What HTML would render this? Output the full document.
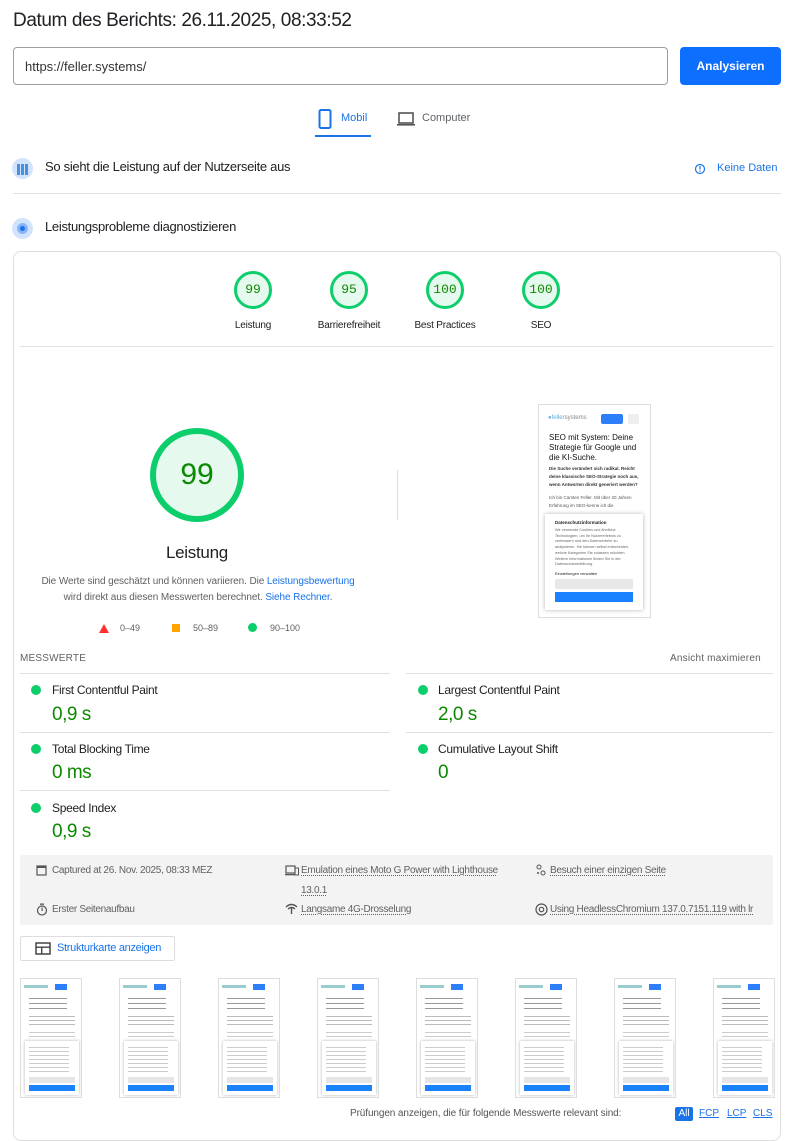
<!DOCTYPE html>
<html><head><meta charset="utf-8"><style>
*{box-sizing:border-box;margin:0;padding:0}
body{width:788px;height:1128px;background:#fff;font-family:"Liberation Sans",sans-serif;color:#202124;position:relative;overflow:hidden}
.a{position:absolute;white-space:nowrap}
.dot{position:absolute;width:10px;height:10px;border-radius:50%;background:#0cce6b}
.hl{position:absolute;height:1px;background:#e0e0e0}
.met{font-size:12px;letter-spacing:-.3px;color:#212121}
.val{font-size:19px;color:#0b8a00;letter-spacing:-.5px}
.gauge{position:absolute;width:38px;height:38px;border-radius:50%;border:3px solid #0cce6b;background:#e6f9ee;font-family:"Liberation Mono",monospace;font-size:13px;color:#0b8a00;text-align:center;line-height:32px}
.gl{position:absolute;font-size:10px;color:#212121;text-align:center;width:90px;letter-spacing:-.2px}
.info{font-size:10px;color:#616161;letter-spacing:-.3px}
.info u{text-decoration:underline dotted;text-underline-offset:2px}
.th{position:absolute;top:978px;width:62px;height:120px;border:1px solid #ddd;overflow:hidden;background:#fff}
.th .t1{position:absolute;left:8px;top:17px;width:38px;height:14px;background:repeating-linear-gradient(#fff 0,#fff 2px,#999 2px,#999 3px,#fff 3px,#fff 5px)}
.th .t2{position:absolute;left:8px;top:35px;width:46px;height:12px;background:repeating-linear-gradient(#fff 0,#fff 2px,#bbb 2px,#bbb 3px,#fff 3px,#fff 4px)}
.th .t3{position:absolute;left:8px;top:51px;width:46px;height:10px;background:repeating-linear-gradient(#fff 0,#fff 2px,#ccc 2px,#ccc 3px,#fff 3px,#fff 4px)}
.th .dlg{position:absolute;left:4px;top:62px;width:54px;height:54px;background:#fff;box-shadow:0 0 3px rgba(0,0,0,.3)}
.th .dl{position:absolute;left:4px;top:4px;width:40px;height:30px;background:repeating-linear-gradient(#fff 0,#fff 2px,#ccc 2px,#ccc 3px,#fff 3px,#fff 4px)}
.th .b1{position:absolute;left:4px;top:36px;width:46px;height:6px;background:#e5e5e5}
.th .b2{position:absolute;left:4px;top:44px;width:46px;height:6px;background:#1a82ff}
.th .nb{position:absolute;left:34px;top:5px;width:12px;height:6px;background:#2d7ff9}
.th .lg{position:absolute;left:3px;top:6px;width:24px;height:3px;background:#9cc}
</style></head><body>
<div class="a" style="left:13px;top:10px;font-size:19px;letter-spacing:-.4px">Datum des Berichts: 26.11.2025, 08:33:52</div>
<div class="a" style="left:13px;top:47px;width:655px;height:38px;border:1px solid #9e9e9e;border-radius:4px"></div>
<div class="a" style="left:25px;top:59px;font-size:13px;color:#333">https://feller.systems/</div>
<div class="a" style="left:680px;top:47px;width:101px;height:38px;background:#0e6efd;border-radius:4px;color:#fff;font-size:12px;text-align:center;line-height:38px;font-weight:bold">Analysieren</div>

<svg class="a" style="left:318px;top:109px" width="14" height="20"><rect x="1.5" y="1" width="11" height="18" rx="1.5" fill="none" stroke="#1a73e8" stroke-width="2"/></svg>
<div class="a" style="left:341px;top:112px;font-size:11px;color:#1a73e8">Mobil</div>
<div class="a" style="left:315px;top:135px;width:56px;height:2px;background:#1a73e8"></div>
<svg class="a" style="left:396px;top:112px" width="20" height="15"><rect x="3" y="1" width="14" height="10" fill="none" stroke="#555" stroke-width="1.6"/><rect x="1" y="12" width="18" height="1.6" fill="#555"/></svg>
<div class="a" style="left:422px;top:112px;font-size:11px;color:#5f6368">Computer</div>

<div class="a" style="left:12px;top:158px;width:21px;height:21px;border-radius:50%;background:#d2e3fc"></div>
<div class="a" style="left:17px;top:164px;width:11px;height:11px;background:linear-gradient(90deg,#4a90e2 3px,transparent 3px,transparent 4px,#4a90e2 4px,#4a90e2 7px,transparent 7px,transparent 8px,#4a90e2 8px)"></div>
<div class="a" style="left:45px;top:159px;font-size:13px;letter-spacing:-.3px">So sieht die Leistung auf der Nutzerseite aus</div>
<svg class="a" style="left:694px;top:163px" width="12" height="12"><circle cx="6" cy="6" r="4.5" fill="none" stroke="#1a73e8" stroke-width="1.2"/><rect x="5.4" y="3" width="1.2" height="3.5" fill="#1a73e8"/><rect x="5.4" y="7.5" width="1.2" height="1.2" fill="#1a73e8"/></svg>
<div class="a" style="left:717px;top:162px;font-size:11px;color:#1a73e8">Keine Daten</div>
<div class="hl" style="left:13px;top:193px;width:768px"></div>

<div class="a" style="left:12px;top:218px;width:21px;height:21px;border-radius:50%;background:#d2e3fc"></div>
<div class="a" style="left:17px;top:223px;width:11px;height:11px;border-radius:50%;background:#8ab4f8"></div>
<div class="a" style="left:20px;top:226px;width:5px;height:5px;border-radius:50%;background:#1a73e8"></div>
<div class="a" style="left:45px;top:219px;font-size:13px;letter-spacing:-.3px">Leistungsprobleme diagnostizieren</div>

<div class="a" style="left:13px;top:251px;width:768px;height:890px;border:1px solid #ddd;border-radius:8px"></div>

<div class="gauge" style="left:234px;top:271px">99</div>
<div class="gauge" style="left:330px;top:271px">95</div>
<div class="gauge" style="left:426px;top:271px">100</div>
<div class="gauge" style="left:522px;top:271px">100</div>
<div class="gl" style="left:208px;top:320px">Leistung</div>
<div class="gl" style="left:304px;top:320px">Barrierefreiheit</div>
<div class="gl" style="left:400px;top:320px">Best Practices</div>
<div class="gl" style="left:496px;top:320px">SEO</div>
<div class="hl" style="left:20px;top:346px;width:753px"></div>

<div class="a" style="left:150px;top:428px;width:94px;height:94px;border-radius:50%;border:6px solid #0cce6b;background:#e6f9ee;text-align:center;line-height:82px;font-size:30px;color:#0b8a00">99</div>
<div class="a" style="left:166px;top:543px;font-size:17px;letter-spacing:-.3px">Leistung</div>
<div class="a" style="left:0;top:574px;width:396px;text-align:center;font-size:10px;color:#616161;line-height:16px;white-space:normal;letter-spacing:-.1px">Die Werte sind geschätzt und können variieren. Die <span style="color:#1a73e8">Leistungsbewertung</span><br>wird direkt aus diesen Messwerten berechnet. <span style="color:#1a73e8">Siehe Rechner</span>.</div>
<svg class="a" style="left:99px;top:624px" width="10" height="9"><polygon points="5,0 10,9 0,9" fill="#ff3333"/></svg>
<div class="a" style="left:120px;top:623px;font-size:9px;color:#616161">0–49</div>
<div class="a" style="left:172px;top:624px;width:8px;height:8px;background:#ffa400"></div>
<div class="a" style="left:193px;top:623px;font-size:9px;color:#616161">50–89</div>
<div class="dot" style="left:248px;top:623px;width:9px;height:9px"></div>
<div class="a" style="left:270px;top:623px;font-size:9px;color:#616161">90–100</div>
<div class="a" style="left:397px;top:470px;width:1px;height:50px;background:#ddd"></div>

<div class="a" style="left:538px;top:404px;width:113px;height:214px;border:1px solid #ddd;background:#fff;overflow:hidden">
 <div class="a" style="left:9px;top:10px;font-size:6px;color:#5ab0e0">●feller<span style="color:#888">systems</span></div>
 <div class="a" style="left:62px;top:9px;width:22px;height:10px;background:#2d7ff9;border-radius:2px"></div>
 <div class="a" style="left:89px;top:9px;width:11px;height:10px;background:#eee"></div>
 <div class="a" style="left:10px;top:28px;font-size:8px;line-height:10px;color:#111;white-space:normal;width:96px">SEO mit System: Deine Strategie für Google und die KI-Suche.</div>
 <div class="a" style="left:10px;top:60px;font-size:4.5px;line-height:8px;color:#333;white-space:normal;width:96px;font-weight:bold">Die Suche verändert sich radikal. Reicht deine klassische SEO-Strategie noch aus, wenn Antworten direkt generiert werden?</div>
 <div class="a" style="left:10px;top:89px;font-size:4.5px;line-height:8px;color:#555;white-space:normal;width:96px">Ich bin Carsten Feller. Mit über 20 Jahren Erfahrung im SEO-kenne ich die</div>
 <div class="a" style="left:6px;top:109px;width:98px;height:96px;background:#fff;box-shadow:0 0 4px rgba(0,0,0,.3)">
  <div class="a" style="left:10px;top:6px;font-size:4.5px;font-weight:bold">Datenschutzinformation</div>
  <div class="a" style="left:10px;top:14px;width:76px;font-size:3.8px;line-height:5.7px;color:#666;white-space:normal">Wir verwende Cookies und ähnliche Technologien, um Ihr Nutzererlebnis zu verbessern und den Datenverkehr zu analysieren. Sie können selbst entscheiden, welche Kategorien Sie zulassen möchten. Weitere Informationen finden Sie in der Datenschutzerklärung.</div>
  <div class="a" style="left:10px;top:57px;font-size:4px">Einstellungen verwalten</div>
  <div class="a" style="left:10px;top:65px;width:78px;height:10px;background:#e8e8e8"></div>
  <div class="a" style="left:10px;top:78px;width:78px;height:10px;background:#1a82ff"></div>
 </div>
</div>

<div class="a" style="left:20px;top:653px;font-size:10px;color:#616161;letter-spacing:.2px">MESSWERTE</div>
<div class="a" style="left:670px;top:653px;font-size:10px;color:#616161;letter-spacing:.2px">Ansicht maximieren</div>
<div class="hl" style="left:20px;top:673px;width:370px"></div>
<div class="hl" style="left:406px;top:673px;width:367px"></div>
<div class="dot" style="left:31px;top:685px"></div><div class="a met" style="left:52px;top:683px">First Contentful Paint</div><div class="a val" style="left:52px;top:704px">0,9 s</div>
<div class="dot" style="left:418px;top:685px"></div><div class="a met" style="left:438px;top:683px">Largest Contentful Paint</div><div class="a val" style="left:438px;top:704px">2,0 s</div>
<div class="hl" style="left:20px;top:732px;width:370px"></div>
<div class="hl" style="left:406px;top:732px;width:367px"></div>
<div class="dot" style="left:31px;top:744px"></div><div class="a met" style="left:52px;top:742px">Total Blocking Time</div><div class="a val" style="left:52px;top:762px">0 ms</div>
<div class="dot" style="left:418px;top:744px"></div><div class="a met" style="left:438px;top:742px">Cumulative Layout Shift</div><div class="a val" style="left:438px;top:762px">0</div>
<div class="hl" style="left:20px;top:790px;width:370px"></div>
<div class="dot" style="left:31px;top:803px"></div><div class="a met" style="left:52px;top:801px">Speed Index</div><div class="a val" style="left:52px;top:821px">0,9 s</div>

<div class="a" style="left:20px;top:855px;width:753px;height:70px;background:#f3f3f3;border-radius:2px"></div>
<svg class="a" style="left:36px;top:864px" width="11" height="12"><rect x="1" y="2" width="9" height="9" fill="none" stroke="#555" stroke-width="1.2"/><rect x="1" y="2" width="9" height="2" fill="#555"/></svg>
<div class="a info" style="left:52px;top:865px">Captured at 26. Nov. 2025, 08:33 MEZ</div>
<svg class="a" style="left:285px;top:865px" width="14" height="11"><rect x="1" y="1" width="9" height="7" fill="none" stroke="#555" stroke-width="1.2"/><rect x="0" y="9" width="10" height="1.3" fill="#555"/><rect x="10" y="3" width="3.5" height="7" fill="none" stroke="#555"/></svg>
<div class="a info" style="left:301px;top:865px"><u>Emulation eines Moto G Power with Lighthouse</u></div>
<div class="a info" style="left:301px;top:885px"><u>13.0.1</u></div>
<svg class="a" style="left:535px;top:864px" width="12" height="12"><circle cx="4" cy="3" r="2" fill="none" stroke="#555"/><circle cx="8" cy="9" r="2" fill="none" stroke="#555"/><circle cx="3" cy="9" r="1" fill="#555"/></svg>
<div class="a info" style="left:550px;top:865px"><u>Besuch einer einzigen Seite</u></div>
<svg class="a" style="left:36px;top:903px" width="12" height="13"><circle cx="6" cy="7.5" r="4.5" fill="none" stroke="#555" stroke-width="1.2"/><rect x="4" y="0.5" width="4" height="1.3" fill="#555"/><rect x="5.5" y="4.5" width="1.2" height="3.5" fill="#555"/></svg>
<div class="a info" style="left:52px;top:904px">Erster Seitenaufbau</div>
<svg class="a" style="left:285px;top:903px" width="13" height="12"><path d="M1 4 Q6.5 -1 12 4 M3 6 Q6.5 3 10 6" fill="none" stroke="#555" stroke-width="1.4"/><rect x="5.8" y="5" width="1.4" height="6" fill="#555"/></svg>
<div class="a info" style="left:301px;top:904px"><u>Langsame 4G-Drosselung</u></div>
<svg class="a" style="left:535px;top:903px" width="13" height="13"><circle cx="6.5" cy="6.5" r="5.5" fill="none" stroke="#555" stroke-width="1.2"/><circle cx="6.5" cy="6.5" r="2.2" fill="none" stroke="#555" stroke-width="1.2"/></svg>
<div class="a info" style="left:550px;top:904px;width:208px;overflow:hidden"><u>Using HeadlessChromium 137.0.7151.119 with lr</u></div>

<div class="a" style="left:20px;top:936px;width:155px;height:25px;border:1px solid #ddd;border-radius:2px"></div>
<svg class="a" style="left:35px;top:942px" width="16" height="13"><rect x="1" y="1" width="14" height="11" fill="none" stroke="#444" stroke-width="1.5"/><rect x="1" y="4.5" width="14" height="1.4" fill="#444"/><rect x="6" y="5" width="1.4" height="7" fill="#444"/></svg>
<div class="a" style="left:57px;top:942px;font-size:11px;color:#1a73e8;letter-spacing:-.3px">Strukturkarte anzeigen</div>

<div class="th" style="left:20px"><i class="lg"></i><i class="nb"></i><i class="t1"></i><i class="t2"></i><i class="t3"></i><div class="dlg"><i class="dl"></i><i class="b1"></i><i class="b2"></i></div></div>
<div class="th" style="left:119px"><i class="lg"></i><i class="nb"></i><i class="t1"></i><i class="t2"></i><i class="t3"></i><div class="dlg"><i class="dl"></i><i class="b1"></i><i class="b2"></i></div></div>
<div class="th" style="left:218px"><i class="lg"></i><i class="nb"></i><i class="t1"></i><i class="t2"></i><i class="t3"></i><div class="dlg"><i class="dl"></i><i class="b1"></i><i class="b2"></i></div></div>
<div class="th" style="left:317px"><i class="lg"></i><i class="nb"></i><i class="t1"></i><i class="t2"></i><i class="t3"></i><div class="dlg"><i class="dl"></i><i class="b1"></i><i class="b2"></i></div></div>
<div class="th" style="left:416px"><i class="lg"></i><i class="nb"></i><i class="t1"></i><i class="t2"></i><i class="t3"></i><div class="dlg"><i class="dl"></i><i class="b1"></i><i class="b2"></i></div></div>
<div class="th" style="left:515px"><i class="lg"></i><i class="nb"></i><i class="t1"></i><i class="t2"></i><i class="t3"></i><div class="dlg"><i class="dl"></i><i class="b1"></i><i class="b2"></i></div></div>
<div class="th" style="left:614px"><i class="lg"></i><i class="nb"></i><i class="t1"></i><i class="t2"></i><i class="t3"></i><div class="dlg"><i class="dl"></i><i class="b1"></i><i class="b2"></i></div></div>
<div class="th" style="left:713px"><i class="lg"></i><i class="nb"></i><i class="t1"></i><i class="t2"></i><i class="t3"></i><div class="dlg"><i class="dl"></i><i class="b1"></i><i class="b2"></i></div></div>

<div class="a" style="left:350px;top:1108px;font-size:10px;color:#555;letter-spacing:-.1px">Prüfungen anzeigen, die für folgende Messwerte relevant sind:</div>
<div class="a" style="left:675px;top:1107px;width:18px;height:14px;background:#1a73e8;color:#fff;font-size:10px;text-align:center;line-height:14px;border-radius:2px">All</div>
<div class="a" style="left:699px;top:1108px;font-size:10px;color:#1a73e8;text-decoration:underline">FCP</div>
<div class="a" style="left:727px;top:1108px;font-size:10px;color:#1a73e8;text-decoration:underline">LCP</div>
<div class="a" style="left:753px;top:1108px;font-size:10px;color:#1a73e8;text-decoration:underline">CLS</div>
</body></html>
